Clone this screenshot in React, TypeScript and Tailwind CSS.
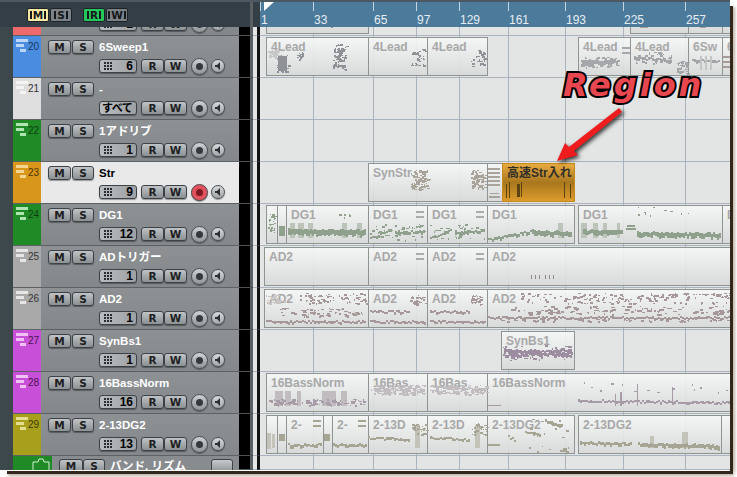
import type { ReactNode } from "react"

// ruler ticks: [bar, x on page]
const ticks: [string, number][] = [
  ["1", 260], ["33", 313], ["65", 373], ["97", 416], ["129", 459],
  ["161", 508], ["193", 565], ["225", 623], ["257", 685],
]

// seeded noise so the note blobs stay the same between runs
const rnd = (seed: number) => {
  let s = seed
  return () => (s = (s * 16807) % 2147483647) / 2147483647
}
const bar = (x: number, y: number, w: number, h: number) => `M${x} ${y}h${w}v${h}h${-w}z`
const dots = (seed: number, x0: number, x1: number, y0: number, y1: number, n: number, maxW = 3) => {
  const r = rnd(seed)
  let d = ""
  for (let i = 0; i < n; i++) {
    const h = r() < 0.5 ? 2 : 1
    d += bar(Math.round(x0 + r() * (x1 - x0)), Math.round(y0 + r() * (y1 - y0)), 1 + Math.floor(r() * maxW), h)
  }
  return d
}
const band = (seed: number, x0: number, y0: number, x1: number, y1: number, thick: number) => {
  const r = rnd(seed)
  let d = ""
  for (let x = x0; x < x1; x += 2) {
    const y = y0 + ((y1 - y0) * (x - x0)) / (x1 - x0)
    d += bar(x, Math.round(y + r() * 2 - 1), 2, Math.max(2, Math.round(thick + r() * 2)))
  }
  return d
}
const eq = (x: number, y: number) => bar(x, y, 8, 2) + bar(x, y + 5, 8, 2)

type Clip = { l: number; r: number; t?: string; on?: boolean }
type Track = {
  no?: number
  color: string
  icon: string
  ink: string
  name: string
  count: string
  selected?: boolean
  clips: Clip[]
  notes: [string, string][]
}

const tracks: Track[] = [
  {
    no: 20, color: "#4a8de0", icon: "#bcd6f6", ink: "#17375e", name: "6Sweep1", count: "6",
    clips: [
      { l: 266, r: 368, t: "4Lead" }, { l: 368, r: 427, t: "4Lead" }, { l: 427, r: 487, t: "4Lead" },
      { l: 578, r: 630, t: "4Lead" }, { l: 630, r: 688, t: "4Lead" }, { l: 688, r: 722, t: "6Sw" },
      { l: 722, r: 740, t: "6" },
    ],
    notes: [
      ["#c6c8c8", dots(3, 268, 279, 14, 21, 50)],
      ["#8e9296", bar(278, 20, 9, 15) + dots(5, 276, 289, 19, 36, 40) + dots(7, 297, 303, 16, 23, 18) + dots(9, 333, 346, 8, 33, 70) + band(2, 333, 30, 343, 8, 3) + dots(11, 411, 426, 13, 30, 30) + dots(13, 470, 485, 13, 30, 30)],
      ["#a4a8aa", band(4, 582, 25, 618, 24, 4) + dots(15, 580, 618, 21, 31, 50) + eq(622, 11)],
      ["#a2a6a8", band(6, 634, 21, 672, 24, 2) + dots(17, 633, 672, 16, 27, 50) + dots(19, 677, 687, 25, 37, 40) + band(8, 692, 24, 720, 24, 2)],
      ["#c4c6c6", bar(700, 20, 2, 14) + bar(705, 20, 2, 14) + bar(710, 20, 2, 14)],
      ["#a89a96", bar(723, 20, 7, 2) + bar(723, 25, 7, 2) + bar(723, 30, 7, 2)],
    ],
  },
  {
    no: 21, color: "#dedede", icon: "#f4f4f4", ink: "#333", name: "-", count: "すべて",
    clips: [], notes: [],
  },
  {
    no: 22, color: "#1f8a26", icon: "#b0e4b2", ink: "#0e3d12", name: "1アドリブ", count: "1",
    clips: [], notes: [],
  },
  {
    no: 23, color: "#d8961a", icon: "#f2d794", ink: "#4d3506", name: "Str", count: "9", selected: true,
    clips: [
      { l: 368, r: 487, t: "SynStr" }, { l: 487, r: 502 },
      { l: 502, r: 574, t: "高速Str入れ", on: true },
    ],
    notes: [
      ["#a8a49a", dots(21, 411, 428, 8, 27, 70) + band(10, 412, 24, 426, 9, 3) + dots(23, 471, 485, 8, 26, 60) + band(12, 472, 24, 484, 9, 3)],
      ["#a8a49a", bar(488, 6, 12, 2) + bar(488, 10, 12, 2) + bar(488, 14, 12, 2) + bar(488, 18, 12, 2) + bar(488, 22, 12, 2) + bar(490, 31, 9, 1) + bar(489, 34, 11, 2)],
      ["#5d4212", bar(506, 22, 1, 14) + bar(509, 20, 1, 16) + bar(517, 22, 3, 13) + bar(521, 20, 1, 15) + bar(564, 20, 1, 16) + bar(570, 22, 1, 14)],
    ],
  },
  {
    no: 24, color: "#1f8a26", icon: "#b0e4b2", ink: "#0e3d12", name: "DG1", count: "12",
    clips: [
      { l: 266, r: 277 }, { l: 277, r: 286 }, { l: 286, r: 368, t: "DG1" }, { l: 368, r: 427, t: "DG1" },
      { l: 427, r: 487, t: "DG1" }, { l: 487, r: 574, t: "DG1" }, { l: 578, r: 722, t: "DG1" }, { l: 722, r: 740, t: "D" },
    ],
    notes: [
      ["#bcc4ba", bar(290, 19, 5, 15) + bar(298, 19, 6, 15) + bar(308, 19, 5, 15) + bar(342, 19, 5, 15) + bar(357, 19, 5, 15) + bar(558, 19, 5, 15) + bar(581, 19, 6, 15) + bar(593, 19, 5, 15) + bar(603, 19, 4, 15) + bar(617, 19, 3, 15)],
      ["#8fa18c", dots(25, 268, 275, 9, 28, 26) + bar(279, 22, 6, 10) + band(14, 288, 25, 365, 26, 5) + dots(27, 336, 350, 8, 14, 8) + band(16, 370, 34, 392, 24, 1) + band(18, 395, 28, 425, 26, 2) + dots(29, 370, 425, 20, 36, 40) + band(20, 430, 34, 452, 24, 1) + band(22, 455, 28, 485, 26, 2) + dots(31, 430, 485, 20, 36, 40) + band(24, 488, 35, 532, 26, 2) + band(26, 532, 26, 572, 28, 4) + band(28, 583, 26, 622, 26, 4) + bar(627, 21, 8, 2) + bar(626, 24, 10, 2) + band(30, 637, 28, 720, 29, 4) + dots(33, 630, 690, 3, 12, 10)],
      ["#a9adaa", eq(416, 7) + eq(476, 7)],
    ],
  },
  {
    no: 25, color: "#a9a9a9", icon: "#e6e6e6", ink: "#333", name: "ADトリガー", count: "1",
    clips: [{ l: 264, r: 368, t: "AD2" }, { l: 368, r: 427, t: "AD2" }, { l: 427, r: 487, t: "AD2" }, { l: 487, r: 740, t: "AD2" }],
    notes: [
      ["#a9adaa", eq(416, 7) + eq(476, 7)],
      ["#8f8a88", bar(531, 29, 1, 4) + bar(535, 29, 1, 4) + bar(539, 29, 1, 4) + bar(545, 29, 1, 4) + bar(549, 29, 1, 4) + bar(553, 29, 1, 4)],
    ],
  },
  {
    no: 26, color: "#a9a9a9", icon: "#e6e6e6", ink: "#333", name: "AD2", count: "1",
    clips: [{ l: 264, r: 368, t: "AD2" }, { l: 368, r: 427, t: "AD2" }, { l: 427, r: 487, t: "AD2" }, { l: 487, r: 740, t: "AD2" }],
    notes: [
      ["#c9c4c4", dots(35, 266, 285, 6, 16, 30)],
      ["#a69898", band(32, 266, 33, 366, 33, 1) + dots(37, 300, 366, 5, 15, 70) + dots(39, 280, 366, 20, 28, 60, 4) + band(34, 370, 23, 410, 23, 1) + band(36, 370, 33, 426, 33, 1) + dots(41, 410, 425, 7, 16, 30) + band(38, 430, 23, 470, 23, 1) + band(40, 430, 33, 485, 33, 1) + dots(43, 470, 485, 7, 16, 30) + band(42, 488, 29, 730, 29, 1) + dots(45, 520, 730, 5, 15, 170) + dots(47, 510, 730, 18, 26, 110, 5) + dots(49, 500, 730, 31, 33, 50)],
    ],
  },
  {
    no: 27, color: "#c850d8", icon: "#f0c2f4", ink: "#47134f", name: "SynBs1", count: "1",
    clips: [{ l: 501, r: 574, t: "SynBs1" }],
    notes: [
      ["#9d8da0", band(44, 504, 21, 572, 19, 2) + band(46, 503, 25, 572, 22, 2) + band(48, 504, 19, 572, 26, 1) + dots(51, 503, 572, 15, 30, 60, 4)],
    ],
  },
  {
    no: 28, color: "#c850d8", icon: "#f0c2f4", ink: "#47134f", name: "16BassNorm", count: "16",
    clips: [{ l: 266, r: 368, t: "16BassNorm" }, { l: 368, r: 427, t: "16Bas" }, { l: 427, r: 487, t: "16Bas" }, { l: 487, r: 740, t: "16BassNorm" }],
    notes: [
      ["#c0bcc0", bar(275, 19, 8, 15) + bar(285, 19, 6, 15) + bar(297, 19, 4, 15) + bar(322, 19, 14, 15) + bar(341, 19, 6, 15) + dots(53, 370, 426, 13, 22, 140, 4) + dots(55, 430, 486, 13, 22, 140, 4)],
      ["#a79ba8", dots(57, 268, 366, 27, 33, 90, 4) + bar(488, 33, 13, 1) + band(52, 578, 28, 730, 30, 1) + dots(59, 578, 730, 8, 24, 14) + bar(615, 22, 1, 12) + bar(620, 20, 2, 14) + bar(637, 12, 1, 22) + bar(672, 15, 1, 18)],
    ],
  },
  {
    no: 29, color: "#a8a01c", icon: "#e4df92", ink: "#3d3a08", name: "2-13DG2", count: "13",
    clips: [
      { l: 266, r: 277 }, { l: 277, r: 286 }, { l: 286, r: 323, t: "2-" }, { l: 323, r: 332 }, { l: 332, r: 368, t: "2-" },
      { l: 368, r: 427, t: "2-13D" }, { l: 427, r: 487, t: "2-13D" }, { l: 487, r: 574, t: "2-13DG2" },
      { l: 578, r: 721, t: "2-13DG2" }, { l: 721, r: 740 },
    ],
    notes: [
      ["#c4c3ba", bar(267, 19, 4, 16) + bar(272, 20, 3, 14) + bar(415, 11, 5, 23) + bar(475, 11, 5, 23) + bar(682, 18, 6, 16) + bar(650, 22, 4, 12)],
      ["#a6a594", bar(279, 20, 6, 7) + bar(324, 20, 6, 7) + band(54, 288, 30, 322, 30, 2) + band(56, 333, 30, 366, 30, 2) + eq(313, 6) + eq(358, 6) + band(58, 368, 23, 410, 25, 1) + band(60, 430, 23, 470, 25, 1) + dots(61, 412, 426, 9, 20, 30) + dots(63, 472, 486, 9, 20, 30) + bar(488, 30, 12, 2) + band(62, 508, 22, 516, 26, 1) + band(64, 525, 18, 540, 20, 1) + band(66, 545, 6, 562, 11, 2) + dots(65, 525, 572, 4, 38, 22) + bar(563, 34, 4, 4) + band(68, 580, 28, 632, 29, 2) + band(70, 638, 29, 720, 31, 3)],
    ],
  },
]

const Btn = ({ children, className }: { children: ReactNode; className: string }) => (
  <div
    className={`flex items-center justify-center h-[14px] rounded-[3px] border border-[#3c4245] bg-gradient-to-b from-[#c0c4c6] to-[#8b9093] font-['DejaVu_Sans',sans-serif] font-bold text-[10.5px] leading-[12px] text-[#1d2022] shadow-[0_1px_1px_rgba(0,0,0,.35)] ${className}`}
  >
    {children}
  </div>
)

const HeadBtn = ({ label, className }: { label: string; className: string }) => (
  <div
    className={`flex items-center justify-center gap-px w-[22px] h-[14px] rounded-[2px] border border-[#1c2226] font-['DejaVu_Sans',sans-serif] font-bold text-[10.5px] leading-[12px] text-[#15181a] ${className}`}
  >
    <span className="w-[2px] h-[8px] bg-[#15181a]" />
    {label}
    <span className="w-[2px] h-[8px] bg-[#15181a]" />
  </div>
)

const TrackIcon = ({ color }: { color: string }) => (
  <svg width="13" height="15" viewBox="0 0 13 15" className="shrink-0">
    <rect x="0" y="0" width="12" height="3" fill={color} />
    <rect x="0" y="5" width="8" height="3" fill={color} />
    <rect x="4" y="10" width="6" height="3" fill={color} />
  </svg>
)

const GridDots = () => (
  <svg width="8" height="8" viewBox="0 0 8 8" fill="#2a2e30" className="shrink-0">
    {[0, 3, 6].map((y) => [0, 3, 6].map((x) => <rect key={`${x}-${y}`} x={x} y={y} width="2" height="2" />))}
  </svg>
)

function TrackPanel({ t }: { t: Track }) {
  return (
    <>
      <div className="flex w-[28px] h-full shrink-0 border-b border-[#5c6163] pl-[3px] pt-[3px]" style={{ background: t.color }}>
        {t.no && (
          <>
            <TrackIcon color={t.icon} />
            <span className="mt-[2px] -ml-[1px] text-[10px] leading-[12px]" style={{ color: t.ink }}>
              {t.no}
            </span>
          </>
        )}
      </div>
      <div
        className={`w-[198px] h-full shrink-0 border-b border-[#5c6163] pl-[7px] pt-[4px] ${
          t.selected ? "bg-[#e9e9e9]" : "bg-gradient-to-b from-[#8d9194] to-[#84888b]"
        }`}
      >
        {t.name ? (
          <div className="flex items-center h-[14px]">
            <Btn className="w-[23px]">M</Btn>
            <Btn className="w-[22px] ml-px">S</Btn>
            <span className={`ml-[5px] font-bold text-[11.5px] leading-[14px] ${t.selected ? "text-black" : "text-white"}`}>
              {t.name}
            </span>
          </div>
        ) : (
          <div className="h-[14px]" />
        )}
        <div className="flex items-center h-[14px] mt-[5px] ml-[51px]">
          <div className="flex items-center justify-between w-[38px] h-[14px] rounded-[3px] border border-[#3c4245] bg-gradient-to-r from-[#b9bdbf] to-[#9da1a4] px-[4px] shadow-[0_1px_1px_rgba(0,0,0,.35)]">
            {t.count === "すべて" ? (
              <span className="-ml-[2px] text-[11px] font-bold leading-[12px] whitespace-nowrap text-black tracking-[-0.5px]">{t.count}</span>
            ) : (
              <>
                <GridDots />
                <span className="-mr-[1px] text-[12px] font-bold leading-[12px] text-black">{t.count}</span>
              </>
            )}
          </div>
          <Btn className="w-[23px] ml-[4px]">R</Btn>
          <Btn className="w-[23px]">W</Btn>
          <div
            className={`flex items-center justify-center w-[17px] h-[17px] ml-[4px] rounded-full border border-[#4a4f52] shadow-[0_1px_1px_rgba(0,0,0,.35)] ${
              t.selected ? "bg-[#e2505c]" : "bg-gradient-to-b from-[#d0d3d5] to-[#8f9497]"
            }`}
          >
            <span className={`w-[7px] h-[7px] rounded-full ${t.selected ? "bg-[#7c1a24]" : "bg-[#35393c]"}`} />
          </div>
          <div className="flex items-center justify-center w-[14px] h-[14px] ml-[3px] rounded-full border border-[#4a4f52] bg-gradient-to-b from-[#d8dbdc] to-[#a2a6a8] shadow-[0_1px_1px_rgba(0,0,0,.35)]">
            <svg width="8" height="8" viewBox="0 0 8 8" fill="#2c3033">
              <path d="M1 3h2l3-3v8L3 5H1z" />
            </svg>
          </div>
        </div>
      </div>
    </>
  )
}

const Gutter = () => (
  <>
    <div className="w-[11px] h-full shrink-0 bg-black border-b border-[#4d5254]" />
    <div className="w-[3px] h-full shrink-0 bg-[#5a6063] border-b border-[#4d5254]" />
    <div className="w-[4px] h-full shrink-0 bg-[#e4e5e5] border-b border-[#aab4c0]" />
    <div className="w-[3px] h-full shrink-0 bg-[#111] border-b border-[#333]" />
  </>
)

function ClipBox({ c }: { c: Clip }) {
  return (
    <div
      className={`absolute top-[1px] h-[39px] overflow-hidden border ${
        c.on
          ? "border-[#c58a1c] bg-gradient-to-b from-[#e8ab40] via-[#a9771e] to-[#dc9b2b]"
          : "border-[#8f9392] bg-gradient-to-b from-[#f6f7f7]/90 to-[#d8dada]/90"
      }`}
      style={{ left: c.l - 260, width: c.r - c.l + 1 }}
    >
      {c.t && (
        <div
          className={`mt-[2px] pl-[4px] whitespace-nowrap text-[12px] font-bold leading-[14px] ${
            c.on ? "text-[#33302a]" : "text-[#a8a8a8]"
          }`}
        >
          {c.t}
        </div>
      )}
    </div>
  )
}

function Lane({ t }: { t?: Track }) {
  return (
    <div className="relative w-[470px] h-full shrink-0 overflow-hidden bg-[#e3e5e5] border-b border-[#aab4c0]">
      {ticks.slice(1).map(([label, x]) => (
        <span key={label} className="absolute top-0 bottom-0 w-px bg-[#aab4c0]" style={{ left: x - 260 }} />
      ))}
      {t?.clips.map((c) => <ClipBox key={c.l} c={c} />)}
      {t && t.notes.length > 0 && (
        <svg className="absolute top-0 left-0" width="470" height="41" viewBox="260 0 470 41" shapeRendering="crispEdges">
          {t.notes.map(([color, d], i) => (
            <path key={i} d={d} fill={color} />
          ))}
        </svg>
      )}
    </div>
  )
}

function TrackRow({ t }: { t: Track }) {
  return (
    <div className="flex h-[42px] shrink-0">
      <div className="w-[13px] h-full shrink-0 bg-[#3d484c]" />
      <TrackPanel t={t} />
      <Gutter />
      <Lane t={t} />
    </div>
  )
}

// the track cut off under the header
const topTrack: Track = {
  color: "#ee6a6a", icon: "#f8c8c8", ink: "#5c1616", name: "", count: "1",
  clips: [{ l: 266, r: 368 }, { l: 630, r: 688 }, { l: 688, r: 722 }, { l: 722, r: 740 }],
  notes: [["#8e9296", bar(331, 33, 2, 1)], ["#a89a96", bar(640, 33, 8, 1) + bar(700, 33, 6, 1)]],
}

function FolderRow() {
  return (
    <div className="flex h-[14px] shrink-0 overflow-hidden">
      <div className="w-[13px] h-full shrink-0 bg-[#3d484c]" />
      <div className="flex w-[39px] h-[30px] shrink-0 justify-end bg-[#1f8a26] pr-[2px] pt-[2px]">
        <svg width="18" height="14" viewBox="0 0 18 14" fill="none" stroke="#d5efd6" strokeWidth="1">
          <path d="M1 4h5l1-3h4l1 3h5v10H1z" />
        </svg>
      </div>
      <div className="flex items-start w-[187px] h-[30px] shrink-0 bg-[#888c8f] pl-[7px] pt-[3px]">
        <Btn className="w-[24px]">M</Btn>
        <Btn className="w-[22px]">S</Btn>
        <span className="ml-[5px] font-bold text-[11.5px] leading-[14px] text-white whitespace-nowrap">バンド. リズム</span>
        <div className="ml-auto mr-[6px] w-[22px] h-[14px] rounded-[3px] border border-[#3c4245] bg-gradient-to-b from-[#c6cacc] to-[#8f9497]" />
      </div>
      <Gutter />
      <Lane />
    </div>
  )
}

function Header() {
  return (
    <div className="flex h-[27px] shrink-0 border-t-2 border-[#4d5862] bg-[#343e46]">
      <div className="flex w-[250px] shrink-0 pl-[27px] pt-[6px]">
        <HeadBtn label="M" className="bg-[#f6e8a2]" />
        <HeadBtn label="S" className="ml-px bg-[#7b8287]" />
        <HeadBtn label="R" className="ml-[11px] bg-[#25c65c]" />
        <HeadBtn label="W" className="ml-px bg-[#7b8287]" />
      </div>
      <div className="w-[3px] shrink-0 bg-[#5a6063]" />
      <div className="w-[7px] shrink-0" />
      <div className="relative w-[470px] shrink-0 bg-[#4c7a9b]">
        <svg className="absolute top-0 left-[4px]" width="10" height="9" viewBox="0 0 10 9" fill="#fff">
          <path d="M0 9V0h10z" />
        </svg>
        {ticks.map(([label, x]) => (
          <div key={label} className="absolute top-0 h-full" style={{ left: x - 260 }}>
            <span className="absolute top-0 left-0 h-[9px] w-px bg-[#c5d6e3]" />
            <span className="absolute top-[12px] left-px text-[12px] leading-[12px] text-[#e6eef3]">{label}</span>
          </div>
        ))}
      </div>
    </div>
  )
}

export default function App() {
  return (
    <div className="relative w-[737px] h-[477px] overflow-hidden bg-white font-['Liberation_Sans','Noto_Sans_CJK_JP',sans-serif]">
      <div className="flex">
        <div className="flex flex-col w-[730px] h-[470px] overflow-hidden">
          <Header />
          <div className="flex flex-col justify-end h-[9px] shrink-0 overflow-hidden">
            <TrackRow t={topTrack} />
          </div>
          {tracks.map((t) => (
            <TrackRow key={t.no} t={t} />
          ))}
          <FolderRow />
        </div>
        <div className="w-[3px] h-[465px] mt-[6px] bg-[#33261a] shadow-[2px_1px_3px_rgba(90,70,40,.45)]" />
      </div>
      <div className="w-[726px] h-[3px] ml-[7px] bg-[#33261a] shadow-[1px_2px_3px_rgba(90,70,40,.45)]" />

      {/* callout drawn over the timeline */}
      <div className="absolute left-[563px] top-[66px] font-['DejaVu_Sans',sans-serif] font-bold italic text-[32px] leading-[38px] tracking-[3px] text-[#e8474f] [-webkit-text-stroke:4px_#000] [paint-order:stroke_fill]">
        Region
      </div>
      <svg className="absolute left-[550px] top-[100px] drop-shadow-[2px_2px_2px_rgba(0,0,0,.8)]" width="80" height="70" viewBox="550 100 80 70">
        <path d="M619 108l3 4-48 39 4 4-21 6 8-18 4 4z" fill="#ee1c1c" />
      </svg>
    </div>
  )
}
